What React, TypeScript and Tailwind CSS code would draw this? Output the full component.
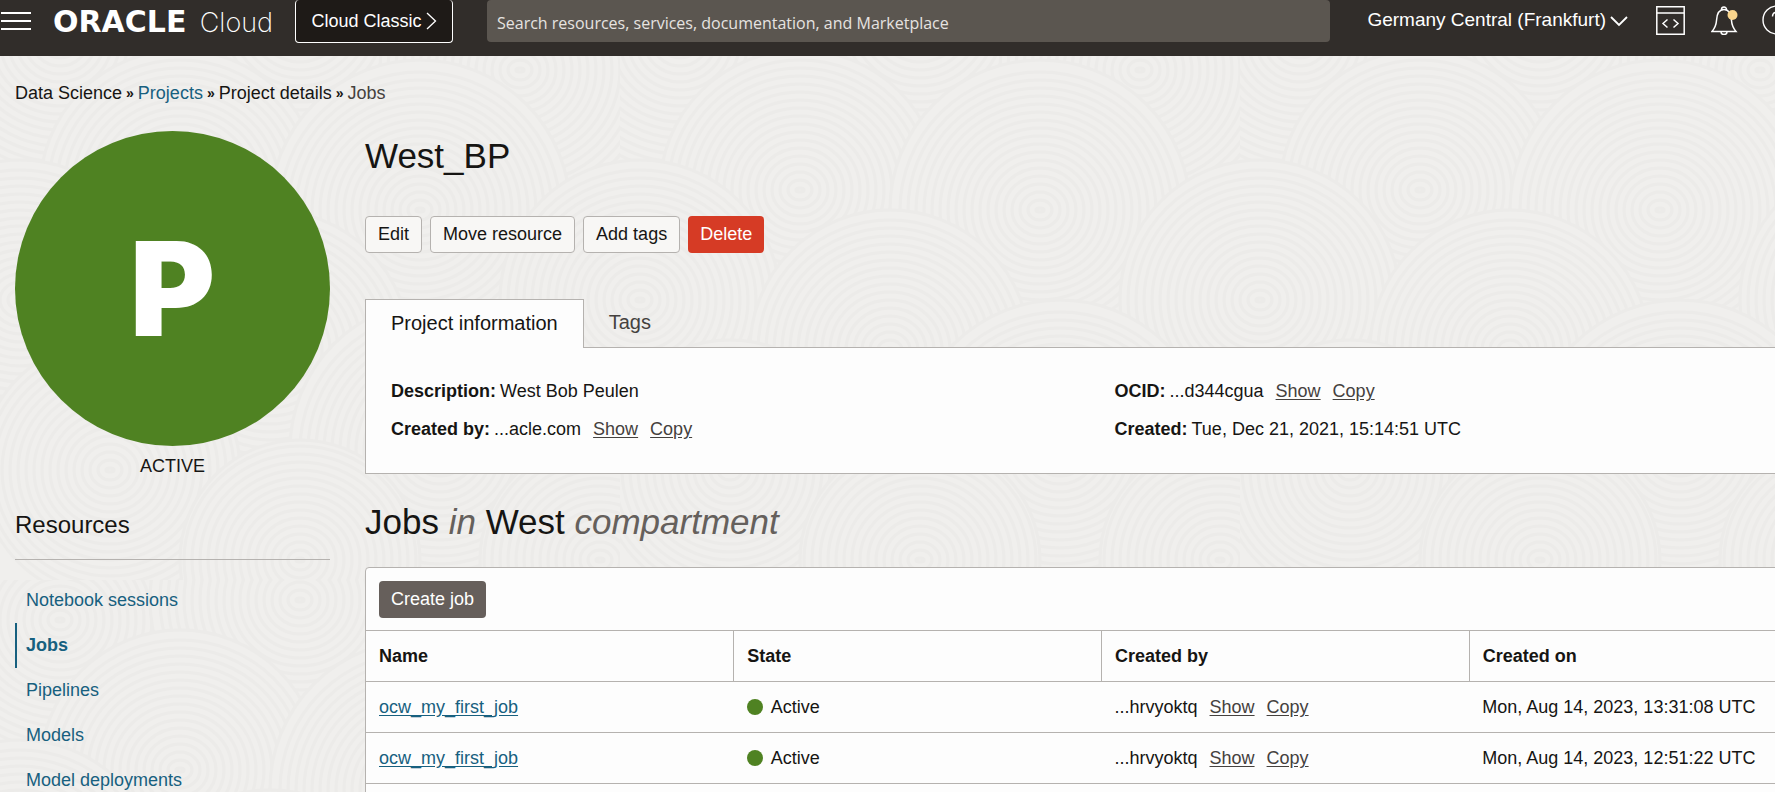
import React, { ReactNode } from "react";

const SWIRLS: [number, number, number][] = [
  [60, 40, 130], [300, 20, 150], [520, 70, 140], [180, 190, 140], [420, 210, 150],
  [20, 300, 140], [640, 300, 140], [270, 350, 140], [110, 470, 130], [440, 450, 150],
  [600, 560, 120], [300, 560, 120],
];

function Backdrop() {
  return (
    <svg className="absolute inset-0 -z-10 h-full w-full" aria-hidden="true">
      <defs>
        <pattern id="swirls" width="620" height="580" patternUnits="userSpaceOnUse">
          <rect width="620" height="580" fill="#f0efed" />
          {SWIRLS.map(([x, y, size], i) => (
            <g key={i} stroke="#ecebe9" strokeWidth="3" fill="none">
              <circle cx={x} cy={y} r={size} fill="#f0efed" />
              {Array.from({ length: Math.floor(size / 8) }, (_, n) => (
                <ellipse key={n} cx={x} cy={y} rx={n * 8 + 4} ry={n * 8 + 2} />
              ))}
            </g>
          ))}
        </pattern>
      </defs>
      <rect width="100%" height="100%" fill="url(#swirls)" />
    </svg>
  );
}

function Header() {
  return (
    <header className="flex h-14 items-start overflow-hidden bg-[#312d2a] text-lg text-white">
      <button type="button" aria-label="Menu" className="mt-3 ml-px shrink-0">
        <svg width="30" height="18" viewBox="0 0 30 18" stroke="currentColor" strokeWidth="2" aria-hidden="true">
          <path d="M0 1h30M0 9h30M0 17h30" />
        </svg>
      </button>
      <a href="#home" className="ml-[22px] flex h-11 w-[220px] shrink-0 items-center justify-between whitespace-nowrap">
        <span className="font-['DejaVu_Sans',sans-serif] text-[30px] leading-none font-bold">ORACLE</span>
        <span className="font-['Inter',sans-serif] text-[27px] leading-none font-extralight">Cloud</span>
      </a>
      <button
        type="button"
        className="ml-[22px] flex h-[43px] w-[158px] shrink-0 items-center justify-center gap-1 rounded border border-t-0 border-white bg-[#1e1a17] whitespace-nowrap"
      >
        Cloud Classic
        <svg width="11" height="18" viewBox="0 0 11 18" fill="none" stroke="currentColor" strokeWidth="1.3" aria-hidden="true">
          <path d="M1 1l8.5 8L1 17" />
        </svg>
      </button>
      <input
        type="search"
        aria-label="Search"
        placeholder="Search resources, services, documentation, and Marketplace"
        className="ml-[34px] h-[42px] min-w-0 flex-1 rounded bg-[#5b5650] px-[10px] pt-1 font-['Open_Sans',sans-serif] text-base text-white placeholder:text-[#e6e3e0]"
      />
      <div className="ml-[37px] -mr-[17px] flex h-10 shrink-0 items-center">
        <button type="button" className="flex items-center gap-1 text-[19px] whitespace-nowrap">
          Germany Central (Frankfurt)
          <svg width="18" height="11" viewBox="0 0 18 11" className="mt-1" fill="none" stroke="currentColor" strokeWidth="1.8" aria-hidden="true">
            <path d="M1 1l8 8 8-8" />
          </svg>
        </button>
        <button type="button" aria-label="Developer tools" className="ml-7">
          <svg width="29" height="29" viewBox="0 0 29 29" fill="none" stroke="currentColor" strokeWidth="1.5" aria-hidden="true">
            <path d="M.8.8h27.4v27.4H.8zM.8 7h27.4M11.5 13.5l-4.5 4 4.5 4M17.5 13.5l4.5 4-4.5 4" />
          </svg>
        </button>
        <button type="button" aria-label="Notifications" className="ml-[26px]">
          <svg width="27" height="30" viewBox="0 0 27 30" fill="none" stroke="currentColor" strokeWidth="1.5" aria-hidden="true">
            <path d="M1 26.5c2.5-3 4.2-6.5 4.5-11 .3-6 1.5-11 7.500-11s7.2 5 7.5 11c.3 4.5 2 8 4.500 11zM10.500 4.500a2.500 2.500 0 1 1 5 0M10 27a3 2.500 0 0 0 6 0" />
            <circle cx="21.5" cy="10" r="5" fill="#fad58c" stroke="none" />
          </svg>
        </button>
        <button type="button" aria-label="Help" className="ml-6">
          <svg width="30" height="30" viewBox="0 0 30 30" fill="none" stroke="currentColor" strokeWidth="1.4" aria-hidden="true">
            <circle cx="15" cy="15" r="14" />
            <path d="M10.5 11.5c0-6 9-5.5 9-.5 0 3.5-4.5 3.5-4.5 7.5M15 21v2" />
          </svg>
        </button>
      </div>
    </header>
  );
}

function Crumbs() {
  const sep = <span className="mx-1 text-sm leading-6 font-bold" aria-hidden="true">»</span>;
  return (
    <nav aria-label="Breadcrumb" className="flex items-center leading-6 whitespace-nowrap">
      <span>Data Science</span>
      {sep}
      <a href="#projects" className="text-[#17607f]">Projects</a>
      {sep}
      <span>Project details</span>
      {sep}
      <span className="text-[#45413e]">Jobs</span>
    </nav>
  );
}

const RESOURCES = ["Notebook sessions", "Jobs", "Pipelines", "Models", "Model deployments"];

function Sidebar() {
  return (
    <aside className="w-[315px] shrink-0">
      <div className="flex aspect-square items-center justify-center rounded-full bg-[#4f8222] font-['Inter',sans-serif] text-[130px] leading-none font-black text-white">
        P
      </div>
      <p className="mt-2 text-center leading-6">ACTIVE</p>
      <h2 className="mt-8 border-b border-[#b5b2af] pb-[19px] text-2xl leading-[30px]">Resources</h2>
      <ul className="mt-[18px]">
        {RESOURCES.map((name) => (
          <li key={name}>
            <a
              href={"#" + name}
              className={
                name === "Jobs"
                  ? "flex h-[45px] items-center border-l-2 border-[#17607f] pb-0.5 pl-[9px] font-bold text-[#17607f]"
                  : "flex h-[45px] items-center border-l-2 border-transparent pb-0.5 pl-[9px] text-[#17607f]"
              }
            >
              {name}
            </a>
          </li>
        ))}
      </ul>
    </aside>
  );
}

function PlainButton({ children }: { children: ReactNode }) {
  return (
    <button type="button" className="h-[37px] rounded border border-[#b5b2af] bg-[#f8f7f5] px-3 pb-0.5">
      {children}
    </button>
  );
}

function ShowCopy() {
  return (
    <span className="ml-3 inline-flex gap-3 text-[#45413e]">
      <button type="button" className="underline underline-offset-2">Show</button>
      <button type="button" className="underline underline-offset-2">Copy</button>
    </span>
  );
}

function Fact({ label, value, actions }: { label: string; value: string; actions?: boolean }) {
  return (
    <div className="flex">
      <dt className="mr-1 font-bold">{label}:</dt>
      <dd>
        {value}
        {actions && <ShowCopy />}
      </dd>
    </div>
  );
}

function ProjectInfo() {
  return (
    <section className="mt-[46px]">
      <div role="tablist" className="flex items-end text-xl">
        <button
          type="button"
          role="tab"
          aria-selected="true"
          className="-mb-px h-[49px] border border-b-0 border-[#b5b2af] bg-[#fdfdfd] px-[25px] pb-[3px]"
        >
          Project information
        </button>
        <button type="button" role="tab" aria-selected="false" className="h-12 px-[25px] pb-[3px] text-[#45413e]">
          Tags
        </button>
      </div>
      <dl className="grid grid-cols-2 gap-x-[26px] gap-y-[14px] border border-[#b5b2af] bg-[#fdfdfd] px-[25px] pt-[31px] pb-8 leading-6">
        <Fact label="Description" value="West Bob Peulen" />
        <Fact label="OCID" value="...d344cgua" actions />
        <Fact label="Created by" value="...acle.com" actions />
        <Fact label="Created" value="Tue, Dec 21, 2021, 15:14:51 UTC" />
      </dl>
    </section>
  );
}

const JOBS = [
  { name: "ocw_my_first_job", state: "Active", by: "...hrvyoktq", on: "Mon, Aug 14, 2023, 13:31:08 UTC" },
  { name: "ocw_my_first_job", state: "Active", by: "...hrvyoktq", on: "Mon, Aug 14, 2023, 12:51:22 UTC" },
];

function Jobs() {
  return (
    <section>
      <h2 className="mt-7 text-[35px] leading-10">
        Jobs <i className="text-[#65605c]">in</i> West <i className="text-[#65605c]">compartment</i>
      </h2>
      <div className="mt-[25px] rounded border border-[#b5b2af] bg-[#fdfdfd]">
        <div className="px-[13px] pt-[13px] pb-3">
          <button type="button" className="h-[37px] rounded bg-[#665f5b] px-3 pb-0.5 text-white">
            Create job
          </button>
        </div>
        <table className="w-full table-fixed border-collapse text-left">
          <thead>
            <tr className="h-[51px] border-t border-[#b5b2af]">
              {["Name", "State", "Created by", "Created on"].map((title) => (
                <th key={title} className="border-r border-[#b5b2af] px-[13px] font-bold last:border-r-0">
                  {title}
                </th>
              ))}
            </tr>
          </thead>
          <tbody>
            {JOBS.map((job) => (
              <tr key={job.on} className="h-[51px] border-y border-[#b5b2af]">
                <td className="px-[13px]">
                  <a href="#job" className="text-[#17607f] underline underline-offset-2">{job.name}</a>
                </td>
                <td className="px-[13px]">
                  <span className="flex items-center gap-2">
                    <span className="size-4 rounded-full bg-[#4f8222]" />
                    {job.state}
                  </span>
                </td>
                <td className="px-[13px]">
                  {job.by}
                  <ShowCopy />
                </td>
                <td className="px-[13px]">{job.on}</td>
              </tr>
            ))}
            <tr className="h-[51px]">
              <td colSpan={4} />
            </tr>
          </tbody>
        </table>
      </div>
    </section>
  );
}

export default function App() {
  return (
    <div className="relative isolate h-screen overflow-hidden font-['Liberation_Sans',Arial,sans-serif] text-lg text-[#161513]">
      <Backdrop />
      <Header />
      <div className="px-[15px] pt-[25px]">
        <Crumbs />
        <div className="mt-[26px] flex items-start gap-[35px]">
          <Sidebar />
          <main className="-mr-[78px] min-w-0 flex-1">
            <h1 className="mt-[5px] text-[35px] leading-10">West_BP</h1>
            <div className="mt-10 flex gap-2">
              <PlainButton>Edit</PlainButton>
              <PlainButton>Move resource</PlainButton>
              <PlainButton>Add tags</PlainButton>
              <button type="button" className="h-[37px] rounded bg-[#d63b25] px-3 pb-0.5 text-white">
                Delete
              </button>
            </div>
            <ProjectInfo />
            <Jobs />
          </main>
        </div>
      </div>
    </div>
  );
}
